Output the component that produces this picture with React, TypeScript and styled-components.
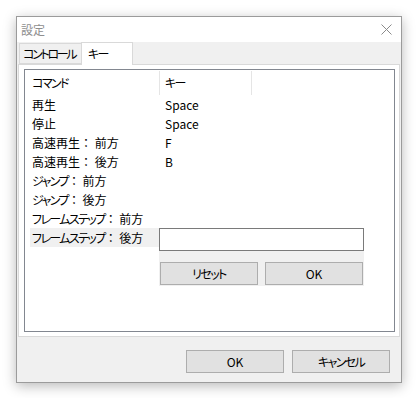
import React from "react";
import styled, { createGlobalStyle } from "styled-components";

const Global = createGlobalStyle`
  html, body { margin: 0; padding: 0; background: #ffffff; }
  body {
    font-family: "Noto Sans CJK JP", "Noto Sans", sans-serif;
    font-size: 12px;
    color: #000;
    font-feature-settings: "palt" 1;
  }
  * { box-sizing: border-box; }
`;

const Stage = styled.div`
  padding: 16px;
  width: 418px;
  height: 398px;
`;

const Window = styled.div`
  width: 386px;
  height: 367px;
  border: 1px solid #9b9b9b;
  background: #f0f0f0;
  box-shadow: 0 3px 12px rgba(0, 0, 0, 0.28);
  display: flex;
  flex-direction: column;
`;

const TitleBar = styled.div`
  height: 25px;
  background: #ffffff;
  display: flex;
  align-items: center;
  justify-content: space-between;
  padding: 0 9px 0 4px;
`;

const Title = styled.span`
  color: #8e8e8e;
  font-size: 12px;
  line-height: 25px;
`;

const CloseIcon = styled.svg`
  width: 11px;
  height: 11px;
  display: block;
`;

const TabStrip = styled.div`
  height: 22px;
  display: flex;
  align-items: flex-end;
  padding-left: 2px;
`;

const Colon = styled.span`
  font-feature-settings: normal;
  letter-spacing: 0;
`;

const Kana = styled.span`
  letter-spacing: -1.6px;
`;

const Tab = styled.div<{ $active?: boolean }>`
  height: ${(p) => (p.$active ? "23px" : "21px")};
  margin-bottom: ${(p) => (p.$active ? "-1px" : "0")};
  padding: ${(p) => (p.$active ? "0 8px 0 6px" : "0 0 0 3px")};
  width: ${(p) => (p.$active ? "52px" : "62px")};
  background: ${(p) => (p.$active ? "#ffffff" : "#f0f0f0")};
  border: 1px solid #d9d9d9;
  border-bottom: ${(p) => (p.$active ? "none" : "1px solid #d9d9d9")};
  border-right: ${(p) => (p.$active ? "1px solid #d9d9d9" : "none")};
  display: flex;
  align-items: center;
  line-height: 18px;
  white-space: nowrap;
  position: relative;
  z-index: 1;
  ${Kana} {
    letter-spacing: ${(p) => (p.$active ? "-1.6px" : "-2.3px")};
  }
`;

const Page = styled.div`
  height: 273px;
  margin: 0 1px;
  background: #ffffff;
  border: 1px solid #d9d9d9;
  padding: 4px 4px 3px 5px;
`;

const ListView = styled.div`
  height: 263px;
  border: 1px solid #828790;
  background: #ffffff;
  position: relative;
`;

const Header = styled.div`
  height: 25px;
  display: flex;
`;

const HeaderCell = styled.div<{ $w?: number }>`
  width: ${(p) => (p.$w ? `${p.$w}px` : "auto")};
  flex: ${(p) => (p.$w ? "none" : "1")};
  padding-left: ${(p) => (p.$w === 135 ? "7px" : "5px")};
  display: flex;
  align-items: center;
  position: relative;
  line-height: 24px;
  white-space: nowrap;
  &::after {
    content: "";
    display: ${(p) => (p.$w ? "block" : "none")};
    position: absolute;
    right: 0;
    top: 1px;
    bottom: 0;
    width: 1px;
    background: #e5e5e5;
  }
`;

const Rows = styled.div`
  display: flex;
  flex-direction: column;
  padding-left: 5px;
`;

const Row = styled.div`
  height: 19px;
  display: flex;
  align-items: center;
  line-height: 19px;
`;

const CmdCell = styled.div<{ $selected?: boolean }>`
  width: 129px;
  height: 19px;
  padding-left: 2px;
  background: ${(p) => (p.$selected ? "#f0f0f0" : "transparent")};
  white-space: nowrap;
`;

const KeyCell = styled.div`
  padding-left: 6px;
  white-space: nowrap;
`;

const Editor = styled.div`
  position: absolute;
  left: 134px;
  top: 158px;
  width: 205px;
  background: #f0f0f0;
  padding: 0 1px 1px 0;
  display: flex;
  flex-direction: column;
`;

const KeyInput = styled.div`
  width: 205px;
  height: 23px;
  border: 1px solid #7a7a7a;
  background: #ffffff;
`;

const EditorButtons = styled.div`
  display: flex;
  gap: 7px;
  padding: 11px 0 0 1px;
`;

const Button = styled.div`
  width: 98px;
  height: 23px;
  background: #e1e1e1;
  border: 1px solid #adadad;
  display: flex;
  align-items: center;
  justify-content: center;
  line-height: 21px;
  white-space: nowrap;
`;

const Footer = styled.div`
  flex: 1;
  display: flex;
  justify-content: flex-end;
  align-items: flex-start;
  gap: 8px;
  padding: 13px 11px 0 0;
`;

const rows: [string, string][] = [
  ["再生", "Space"],
  ["停止", "Space"],
  ["高速再生： 前方", "F"],
  ["高速再生： 後方", "B"],
  ["ジャンプ： 前方", ""],
  ["ジャンプ： 後方", ""],
  ["フレームステップ： 前方", ""],
  ["フレームステップ： 後方", ""],
];

/* Renders text with katakana runs tightened and the full-width colon kept at full width. */
function Label({ text }: { text: string }) {
  const tokens = text.split(/([\u30A0-\u30FF]+|：)/).filter((t) => t.length > 0);
  return (
    <>
      {tokens.map((t, i) =>
        t === "：" ? (
          <Colon key={i}>{t}</Colon>
        ) : /^[\u30A0-\u30FF]+$/.test(t) ? (
          <Kana key={i}>{t}</Kana>
        ) : (
          <React.Fragment key={i}>{t}</React.Fragment>
        )
      )}
    </>
  );
}

export default function App() {
  return (
    <>
      <Global />
      <Stage>
        <Window>
          <TitleBar>
            <Title>設定</Title>
            <CloseIcon viewBox="0 0 11 11">
              <path d="M0.5 0.5 L10.5 10.5 M10.5 0.5 L0.5 10.5" stroke="#8a8a8a" strokeWidth="1" fill="none" />
            </CloseIcon>
          </TitleBar>
          <TabStrip>
            <Tab>
              <Label text="コントロール" />
            </Tab>
            <Tab $active>
              <Label text="キー" />
            </Tab>
          </TabStrip>
          <Page>
            <ListView>
              <Header>
                <HeaderCell $w={135}>
                  <Label text="コマンド" />
                </HeaderCell>
                <HeaderCell $w={92}>
                  <Label text="キー" />
                </HeaderCell>
                <HeaderCell />
              </Header>
              <Rows>
                {rows.map(([cmd, key], i) => (
                  <Row key={i}>
                    <CmdCell $selected={i === rows.length - 1}>
                      <Label text={cmd} />
                    </CmdCell>
                    <KeyCell>{key}</KeyCell>
                  </Row>
                ))}
              </Rows>
              <Editor>
                <KeyInput />
                <EditorButtons>
                  <Button>
                    <Label text="リセット" />
                  </Button>
                  <Button>OK</Button>
                </EditorButtons>
              </Editor>
            </ListView>
          </Page>
          <Footer>
            <Button>OK</Button>
            <Button>
              <Label text="キャンセル" />
            </Button>
          </Footer>
        </Window>
      </Stage>
    </>
  );
}
